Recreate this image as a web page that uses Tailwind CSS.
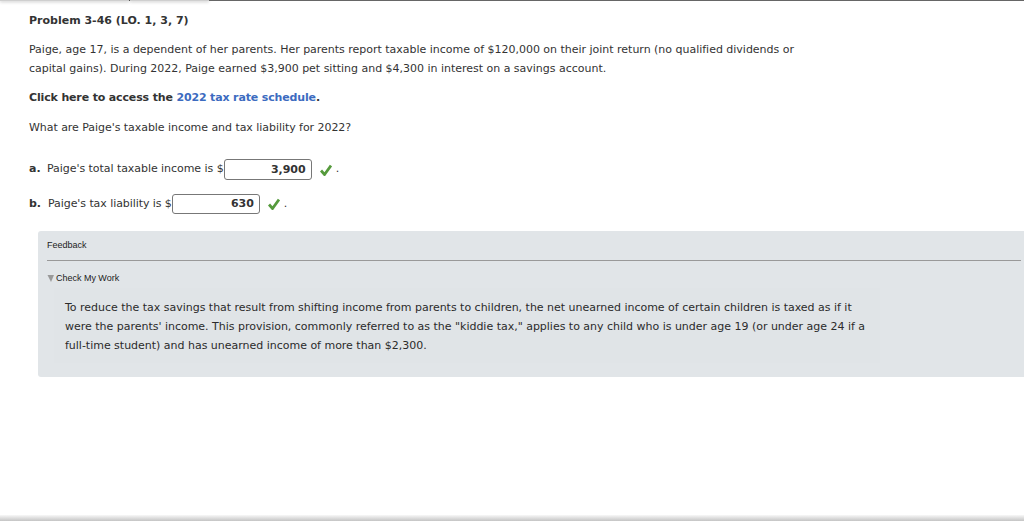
<!DOCTYPE html>
<html lang="en">
<head>
    <meta charset="UTF-8">
    <title>Problem 3-46</title>
    <script src="https://cdn.jsdelivr.net/npm/@tailwindcss/browser@4"></script>
</head>
<body class="bg-white h-[525px] w-[1024px] overflow-hidden flex flex-col font-['DejaVu_Sans',sans-serif] text-[11px] text-[#333]">
    <!-- top edge -->
    <div class="h-[1px] shrink-0 flex">
        <div class="w-[129px] bg-[#cfcfcf] shadow-[0_1px_3px_rgba(0,0,0,0.35)]"></div>
        <div class="w-[1px] bg-[#555]"></div>
        <div class="w-[79px] bg-[#cfcfcf] shadow-[0_1px_3px_rgba(0,0,0,0.35)]"></div>
        <div class="flex-1 bg-[#666]"></div>
    </div>

    <main class="h-[514px] shrink-0 pt-[13px] tracking-[-0.015px]">
        <div class="pl-[29px]">
            <h1 class="font-bold leading-[14px] tracking-normal">Problem 3-46 (LO. 1, 3, 7)</h1>
            <p class="mt-[12px] leading-[19px]">Paige, age 17, is a dependent of her parents. Her parents report taxable income of $120,000 on their joint return (no qualified dividends or<br>capital gains). During 2022, Paige earned $3,900 pet sitting and $4,300 in interest on a savings account.</p>
            <p class="mt-[10px] leading-[19px] font-bold tracking-[-0.15px]">Click here to access the <a class="text-[#3c6bc0]">2022 tax rate schedule</a>.</p>
            <p class="mt-[11px] leading-[19px] tracking-[-0.05px]">What are Paige's taxable income and tax liability for 2022?</p>

            <!-- answers -->
            <div class="mt-[22px] flex items-center h-[21px]">
                <span class="font-bold w-[18px]">a.</span>
                <span class="tracking-[-0.05px]">Paige's total taxable income is $</span>
                <span class="w-[88px] h-[21px] border border-[#777] rounded-[3px] bg-white font-bold text-right pr-[5px] leading-[19px]">3,900</span>
                <svg class="ml-[8px]" width="12" height="12" viewBox="0 0 12 12"><path d="M1 6.5 L4.5 10.5 L11 1.5" fill="none" stroke="#559a3c" stroke-width="2.8"/></svg>
                <span class="ml-[4px]">.</span>
            </div>
            <div class="mt-[14px] flex items-center h-[20px]">
                <span class="font-bold w-[19px]">b.</span>
                <span class="tracking-[-0.07px]">Paige's tax liability is $</span>
                <span class="w-[88px] h-[20px] border border-[#777] rounded-[3px] bg-white font-bold text-right pr-[5px] leading-[18px]">630</span>
                <svg class="ml-[8px]" width="12" height="12" viewBox="0 0 12 12"><path d="M1 6.5 L4.5 10.5 L11 1.5" fill="none" stroke="#559a3c" stroke-width="2.8"/></svg>
                <span class="ml-[4px]">.</span>
            </div>
        </div>

        <!-- feedback panel -->
        <section class="ml-[38px] mt-[17px] h-[146px] bg-[#e1e5e8] rounded-l-[3px] pt-[8px] pl-[9px] pr-[3px]">
            <div class="font-['Liberation_Sans',sans-serif] text-[9px] text-[#222] leading-[12px]">Feedback</div>
            <div class="mt-[9px] h-[1px] bg-[#999]"></div>
            <div class="mt-[11px] flex items-center font-['Liberation_Sans',sans-serif] text-[9px] text-[#222] leading-[12px]">
                <svg width="8" height="7" viewBox="0 0 8 7"><path d="M0.5 0 H7 L4 7 Z" fill="#999"/></svg>
                <span class="ml-[1px]">Check My Work</span>
            </div>
            <div class="mt-[4px] w-[826px] h-[75px] ml-[7px] bg-[#e0e4e7] pl-[11px] pt-[10px] leading-[19px] text-[#2b2b2b]">To reduce the tax savings that result from shifting income from parents to children, the net unearned income of certain children is taxed as if it<br>were the parents' income. This provision, commonly referred to as the "kiddie tax," applies to any child who is under age 19 (or under age 24 if a<br>full-time student) and has unearned income of more than $2,300.</div>
        </section>
    </main>

    <!-- bottom edge -->
    <div class="h-[6px] shrink-0 bg-gradient-to-b from-[#f8f8f8] to-[#c4c4c4]"></div>
</body>
</html>
